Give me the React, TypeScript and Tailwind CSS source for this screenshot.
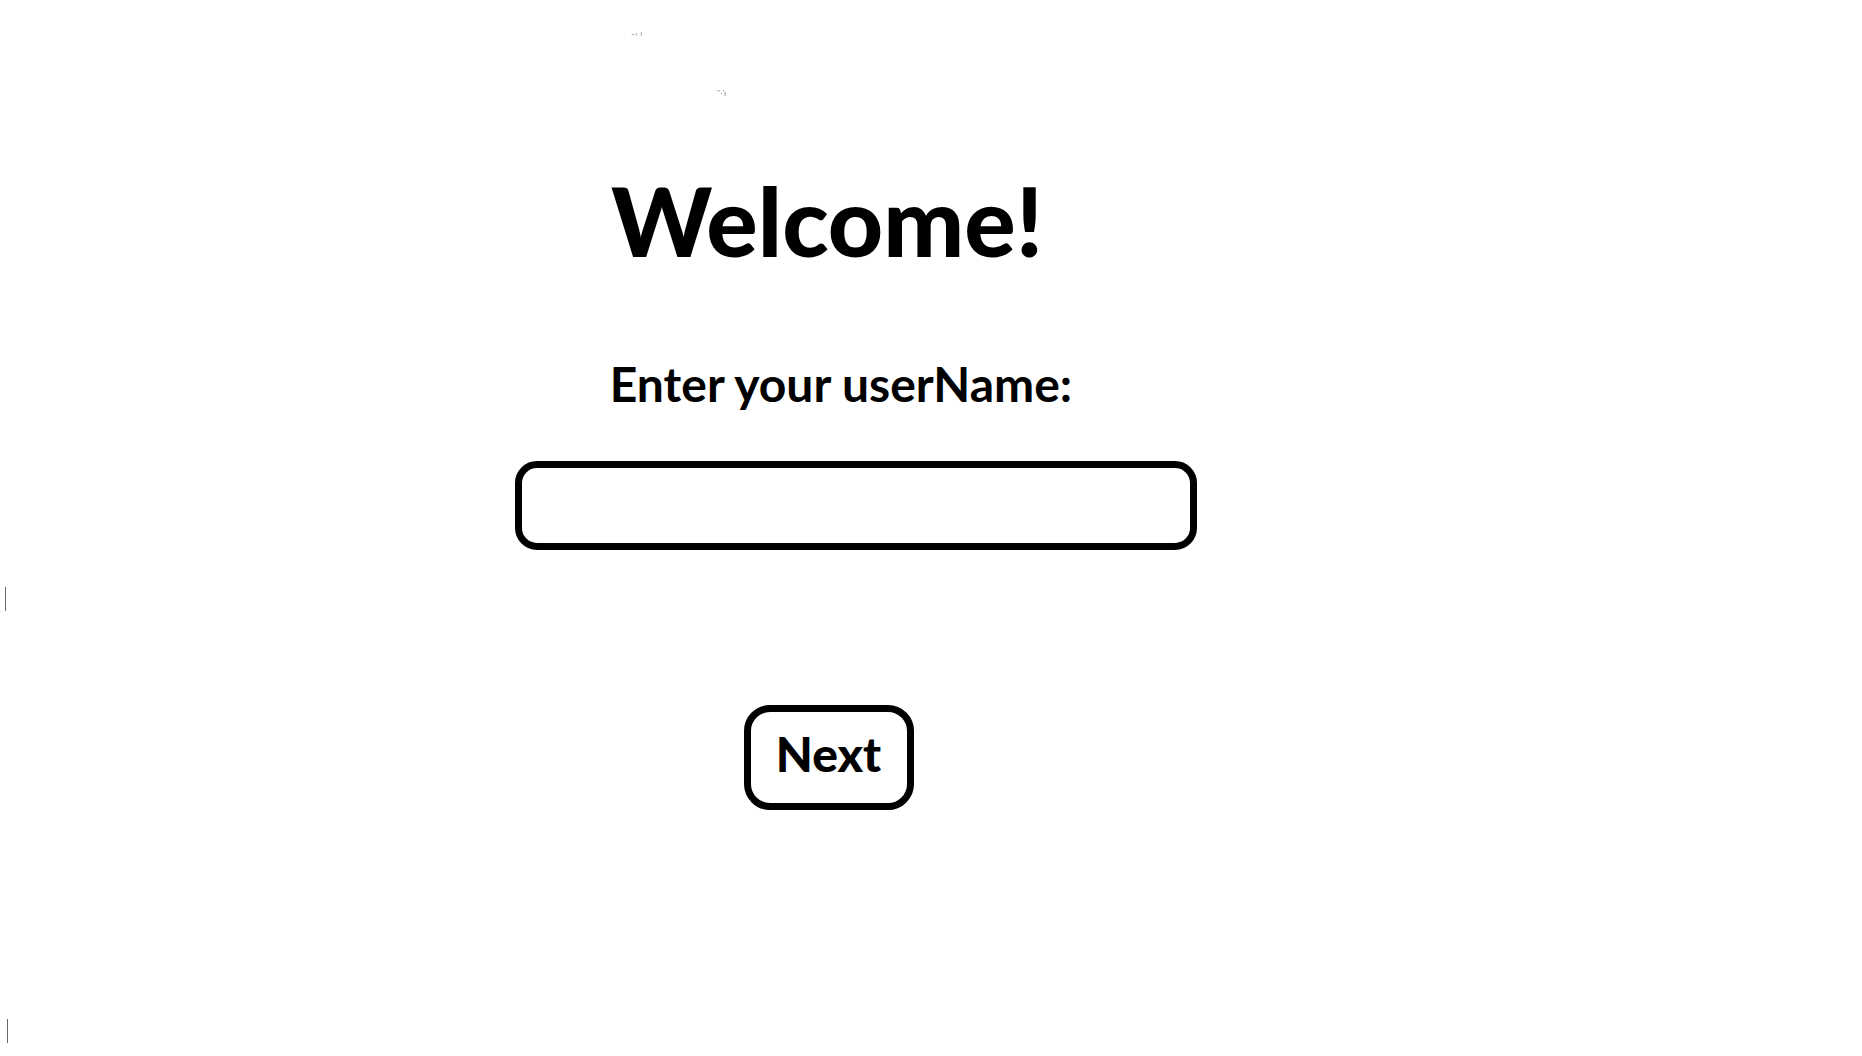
import React from "react";

export default function App() {
  return (
    <div
      className="relative w-[1862px] h-[1056px] bg-white overflow-hidden text-black"
      style={{ fontFamily: "Lato, 'Noto Sans', sans-serif" }}
    >
      <span className="absolute left-[631px] top-[30px] text-[6px] leading-[7px] text-gray-500 tracking-[1px]">
        ~ı l
      </span>
      <span className="absolute left-[716px] top-[89px] text-[7px] leading-[9px] text-gray-500">
        ˙'ˑ'ı
      </span>
      <div className="absolute left-[5px] top-[587px] w-[1px] h-[24px] bg-[#666]" />
      <div className="absolute left-[7px] top-[1019px] w-[1px] h-[24px] bg-[#666]" />

      <div className="flex flex-col items-center w-[1654px] pt-[172px]">
        <h1 className="text-[96px] leading-[96px] font-black">Welcome!</h1>
        <h2 className="mt-[92px] ml-[28px] text-[48px] leading-[48px] font-bold">
          Enter your userName:
        </h2>
        <input
          type="text"
          className="mt-[53px] ml-[58px] w-[682px] h-[89px] border-[7px] border-black rounded-[22px] outline-none px-4 text-[32px]"
        />
        <button className="mt-[155px] ml-[3px] w-[170px] h-[105px] border-[7px] border-black rounded-[26px] flex items-center justify-center pb-[7px] text-[48px] leading-[48px] font-black bg-white">
          Next
        </button>
      </div>
    </div>
  );
}
